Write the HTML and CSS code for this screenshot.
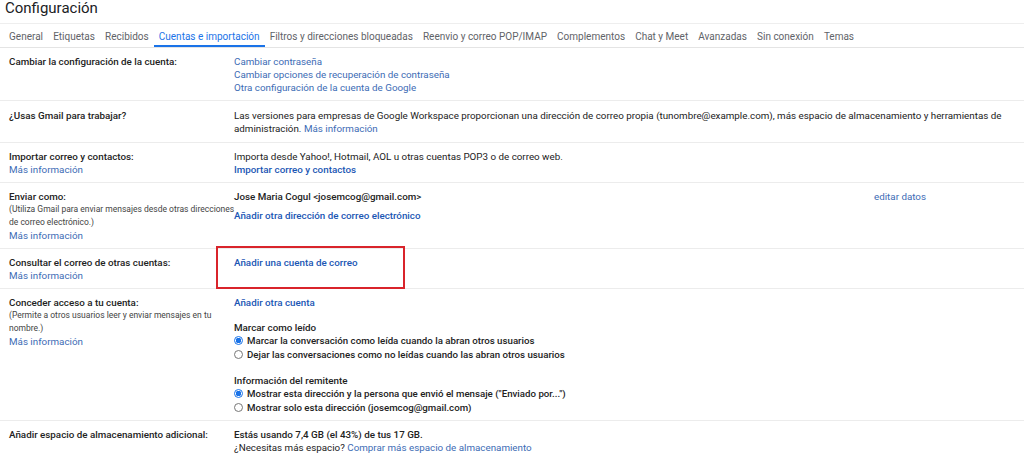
FILE: index.html
```html
<!DOCTYPE html>
<html lang="es">
<head>
<meta charset="utf-8">
<title>Configuración</title>
<link rel="stylesheet" href="styles.css">
</head>
<body>
<div class="page">
  <h1 class="title">Configuración</h1>
  <nav class="tabs">
    <span class="tab">General</span>
    <span class="tab">Etiquetas</span>
    <span class="tab">Recibidos</span>
    <span class="tab active">Cuentas e importación</span>
    <span class="tab">Filtros y direcciones bloqueadas</span>
    <span class="tab">Reenvio y correo POP/IMAP</span>
    <span class="tab">Complementos</span>
    <span class="tab">Chat y Meet</span>
    <span class="tab">Avanzadas</span>
    <span class="tab">Sin conexión</span>
    <span class="tab">Temas</span>
  </nav>

  <div class="rows">
    <div class="row">
      <div class="label"><b>Cambiar la configuración de la cuenta:</b></div>
      <div class="value">
        <a class="lnk">Cambiar contraseña</a>
        <a class="lnk">Cambiar opciones de recuperación de contraseña</a>
        <a class="lnk">Otra configuración de la cuenta de Google</a>
      </div>
    </div>

    <div class="row tall">
      <div class="label"><b>¿Usas Gmail para trabajar?</b></div>
      <div class="value">
        <p class="txt">Las versiones para empresas de Google Workspace proporcionan una dirección de correo propia (tunombre@example.com), más espacio de almacenamiento y herramientas de administración. <a class="lnk inl">Más información</a></p>
      </div>
    </div>

    <div class="row">
      <div class="label"><b>Importar correo y contactos:</b><a class="lnk">Más información</a></div>
      <div class="value">
        <p class="txt">Importa desde Yahoo!, Hotmail, AOL u otras cuentas POP3 o de correo web.</p>
        <a class="blnk">Importar correo y contactos</a>
      </div>
    </div>

    <div class="row">
      <div class="label">
        <b>Enviar como:</b>
        <span class="small">(Utiliza Gmail para enviar mensajes desde otras direcciones</span>
        <span class="small">de correo electrónico.)</span>
        <a class="lnk">Más información</a>
      </div>
      <div class="value split">
        <div class="main">
          <b class="strong">Jose Maria Cogul &lt;josemcog@gmail.com&gt;</b>
          <a class="blnk gap6">Añadir otra dirección de correo electrónico</a>
        </div>
        <a class="lnk edit">editar datos</a>
      </div>
    </div>

    <div class="row">
      <div class="label"><b>Consultar el correo de otras cuentas:</b><a class="lnk">Más información</a></div>
      <div class="value">
        <a class="blnk">Añadir una cuenta de correo</a>
      </div>
      <div class="highlight"></div>
    </div>

    <div class="row">
      <div class="label">
        <b>Conceder acceso a tu cuenta:</b>
        <span class="small">(Permite a otros usuarios leer y enviar mensajes en tu</span>
        <span class="small">nombre.)</span>
        <a class="lnk">Más información</a>
      </div>
      <div class="value">
        <a class="blnk">Añadir otra cuenta</a>
        <div class="group">
          <span class="ghead">Marcar como leído</span>
          <label class="radio"><span class="dot on"></span>Marcar la conversación como leída cuando la abran otros usuarios</label>
          <label class="radio"><span class="dot"></span>Dejar las conversaciones como no leídas cuando las abran otros usuarios</label>
        </div>
        <div class="group">
          <span class="ghead">Información del remitente</span>
          <label class="radio"><span class="dot on"></span>Mostrar esta dirección y la persona que envió el mensaje ("Enviado por...")</label>
          <label class="radio"><span class="dot"></span>Mostrar solo esta dirección (josemcog@gmail.com)</label>
        </div>
      </div>
    </div>

    <div class="row last">
      <div class="label"><b>Añadir espacio de almacenamiento adicional:</b></div>
      <div class="value">
        <b class="strong">Estás usando 7,4 GB (el 43%) de tus 17 GB.</b>
        <p class="txt">¿Necesitas más espacio? <a class="lnk inl">Comprar más espacio de almacenamiento</a></p>
      </div>
    </div>
  </div>
</div>
</body>
</html>
```

FILE: styles.css
```css
* { box-sizing: border-box; }
html, body { margin: 0; padding: 0; background: #fff; }
body {
  font-family: Roboto, "Liberation Sans", Arial, sans-serif;
  color: #222;
  width: 1024px;
  height: 465px;
  overflow: hidden;
}
.page { position: relative; }

.title {
  margin: 0;
  padding: 0 0 0 5px;
  height: 23px;
  font-family: Roboto, "Open Sans", sans-serif;
  font-weight: 400;
  font-size: 15px;
  line-height: 17px;
  color: #202124;
}

.tabs {
  display: flex;
  height: 25px;
  padding-left: 4px;
  border-top: 1px solid #eeeeee;
  border-bottom: 1px solid #e4e4e4;
  align-items: stretch;
}
.tab {
  display: flex;
  align-items: center;
  padding: 3px 5.05px 0;
  font-size: 10px;
  color: #5f6368;
  border-bottom: 2px solid transparent;
  white-space: nowrap;
}
.tab.active {
  color: #1a73e8;
  border-bottom-color: #1a73e8;
}

.rows { display: flex; flex-direction: column; }
.row {
  position: relative;
  display: grid;
  grid-template-columns: 234px 1fr;
  padding: 7px 0 6px;
  border-bottom: 1px solid #ececec;
  font-size: 9.8px;
  line-height: 13px;
}
.row.tall { padding: 8px 0 7px; }
.row.last { border-bottom: none; }
.label {
  padding: 0 1px 0 9px;
  display: flex;
  flex-direction: column;
  min-width: 0;
}
.label b { font-weight: 500; color: #222; }
.value { display: flex; flex-direction: column; }
.split { flex-direction: row; }
.split .main { display: flex; flex-direction: column; width: 640px; }

.txt { margin: 0; color: #222; }
.lnk { color: #3d6cb5; text-decoration: none; }
.inl { display: inline; }
.blnk { color: #1a56b4; font-weight: 500; }
.strong { font-weight: 500; color: #222; }
.gap6 { margin-top: 6px; }
.small {
  font-size: 8.5px;
  color: #444;
  line-height: 13px;
  white-space: nowrap;
}

.group { display: flex; flex-direction: column; margin-top: 12px; }
.group + .group { margin-top: 13px; }
.ghead { color: #222; font-weight: 500; }
.radio {
  display: flex;
  align-items: center;
  font-weight: 500;
  color: #222;
  height: 13.5px;
  font-size: 9.7px;
}
.dot {
  width: 9px;
  height: 9px;
  border-radius: 50%;
  border: 1px solid #777;
  margin: 0 4px 0 0;
  flex: none;
  background: #fff;
}
.dot.on {
  border-color: #1a73e8;
  background: radial-gradient(circle, #1a73e8 0 2.6px, #fff 3px);
}

.highlight {
  position: absolute;
  left: 216px;
  top: -3px;
  width: 189px;
  height: 43px;
  border: 2px solid #d9242b;
  pointer-events: none;
}
```
